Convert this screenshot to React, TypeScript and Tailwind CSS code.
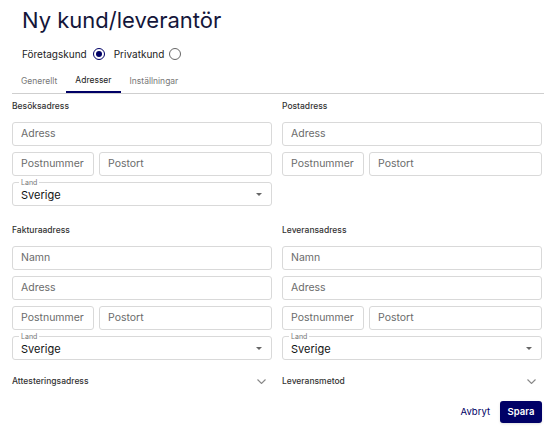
import React from "react";

const font = { fontFamily: "Inter, 'Noto Sans', sans-serif" };

function Input({ placeholder, className = "" }: { placeholder: string; className?: string }) {
  return (
    <div className={`h-[24px] border border-[#d9d9d9] rounded-[3px] flex items-center px-[8px] text-[10.5px] text-[#6b6b6b] ${className}`}>
      {placeholder}
    </div>
  );
}

function LandSelect() {
  return (
    <div className="relative h-[24px] border border-[#d9d9d9] rounded-[3px] flex items-center justify-between pl-[8px] pr-[9px]">
      <span className="absolute left-[6px] -top-[5px] bg-white px-[2px] text-[7px] leading-[9px] text-[#777]">Land</span>
      <span className="text-[11px] text-[#111] pt-[3px]">Sverige</span>
      <svg width="6" height="3" viewBox="0 0 6 3"><path d="M0 0h6L3 3z" fill="#666" /></svg>
    </div>
  );
}

function AddressBlock({ title, withName, withLand }: { title: string; withName?: boolean; withLand?: boolean }) {
  return (
    <div className="flex flex-col">
      <div className="text-[8.5px] font-medium text-[#333] h-[12px] leading-[12px] mb-[10px]">{title}</div>
      <div className="flex flex-col gap-[6px]">
        {withName && <Input placeholder="Namn" />}
        <Input placeholder="Adress" />
        <div className="flex gap-[5px]">
          <Input placeholder="Postnummer" className="w-[82px] shrink-0" />
          <Input placeholder="Postort" className="flex-1" />
        </div>
        {withLand ? <LandSelect /> : <div className="h-[24px]" />}
      </div>
    </div>
  );
}

function Chevron() {
  return (
    <svg width="9" height="5" viewBox="0 0 9 5" fill="none"><path d="M0.5 0.5l4 4 4-4" stroke="#888" strokeWidth="1.1" /></svg>
  );
}

export default function App() {
  return (
    <div className="w-[556px] h-[440px] bg-white overflow-hidden" style={font}>
      <div className="px-[12px]">
        <h1 className="pl-[10px] pt-[6px] text-[22px] leading-[28px] text-[#14163a] font-normal">Ny kund/leverantör</h1>
        <div className="pl-[10px] mt-[13px] flex items-center h-[14px] text-[10px] text-[#222]">
          <span>Företagskund</span>
          <span className="ml-[6px] w-[12px] h-[12px] rounded-full border-[1.5px] border-[#000066] flex items-center justify-center">
            <span className="w-[6px] h-[6px] rounded-full bg-[#000066]" />
          </span>
          <span className="ml-[9px]">Privatkund</span>
          <span className="ml-[5px] w-[12px] h-[12px] rounded-full border-[1.5px] border-[#666]" />
        </div>
        <div className="mt-[12px] flex border-b border-[#cfcfcf] text-[8.5px] h-[21px]">
          <div className="px-[9px] text-[#777] flex items-center pb-[4px]">Generellt</div>
          <div className="px-[9px] text-[#222] flex items-center pb-[4px] border-b-2 border-[#000066]">Adresser</div>
          <div className="px-[9px] text-[#777] flex items-center pb-[4px]">Inställningar</div>
        </div>
        <div className="grid grid-cols-2 gap-x-[10px] mt-[6px] mr-[2px]">
          <AddressBlock title="Besöksadress" withLand />
          <AddressBlock title="Postadress" />
        </div>
        <div className="grid grid-cols-2 gap-x-[10px] mt-[18px] mr-[2px]">
          <AddressBlock title="Fakturaadress" withName withLand />
          <AddressBlock title="Leveransadress" withName withLand />
        </div>
        <div className="grid grid-cols-2 gap-x-[10px] mt-[15px] mr-[2px] text-[8.5px] font-medium text-[#333]">
          <div className="flex items-center justify-between pr-[6px] h-[12px]">
            <span>Attesteringsadress</span>
            <Chevron />
          </div>
          <div className="flex items-center justify-between pr-[6px] h-[12px]">
            <span>Leveransmetod</span>
            <Chevron />
          </div>
        </div>
        <div className="flex justify-end items-center mt-[14px] pr-[2px]">
          <span className="text-[9.5px] text-[#000066] mr-[10px]">Avbryt</span>
          <button className="h-[22px] w-[42px] rounded-[3px] bg-[#000066] text-white text-[9.5px] font-semibold shadow">Spara</button>
        </div>
      </div>
    </div>
  );
}
